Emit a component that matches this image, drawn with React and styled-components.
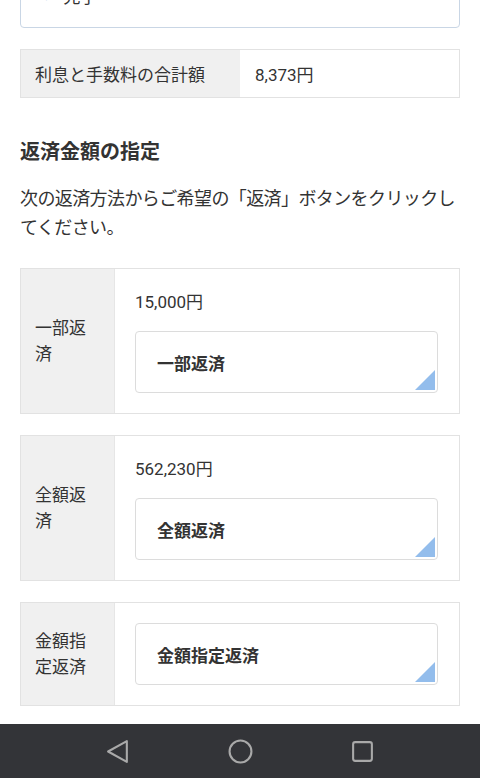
import styled, { createGlobalStyle } from "styled-components";

const GlobalStyle = createGlobalStyle`
  html, body {
    margin: 0;
    padding: 0;
    background: #fff;
  }
  body {
    font-family: Roboto, "Noto Sans CJK JP", "Noto Sans", sans-serif;
    color: #333;
    overflow: hidden;
  }
`

const Page = styled.div`
  padding: 0 20px 90px;
`

const StatusBox = styled.div`
  margin-top: -31px;
  padding: 14px 24px 17px;
  border: 1px solid #c9d6e5;
  border-radius: 4px;
  display: flex;
  align-items: center;
  gap: 10px;
  font-size: 17px;
  line-height: 26px;
`

const Chevron = styled.span`
  color: #8fb3dc;
  font-size: 16px;
`

const SummaryTable = styled.div`
  margin-top: 21px;
  display: grid;
  grid-template-columns: 219px 1fr;
  border: 1px solid #e2e2e2;
  font-size: 17px;
  height: 47px;
`

const Cell = styled.div`
  display: flex;
  align-items: center;
  padding-left: ${(p) => (p.head ? "14px" : "15px")};
  background: ${(p) => (p.head ? "#f0f0f0" : "#fff")};
`

const Heading = styled.h2`
  margin: 39px 0 0;
  font-size: 20px;
  line-height: 30px;
  font-weight: 700;
  color: #333;
`

const Lead = styled.p`
  margin: 17px -4px 0 0;
  font-size: 18px;
  line-height: 29px;
  letter-spacing: -0.6px;
`

const CardList = styled.div`
  margin-top: 26px;
  display: flex;
  flex-direction: column;
  gap: 21px;
`

const Card = styled.div`
  display: grid;
  grid-template-columns: 94px 1fr;
  border: 1px solid #e2e2e2;
`

const Label = styled.div`
  display: flex;
  align-items: center;
  padding: 0 15px 0 14px;
  background: #f0f0f0;
  border-right: 1px solid #e6e6e6;
  font-size: 17px;
  line-height: 26px;
`

const Body = styled.div`
  padding: 20px 21px 20px 20px;
  display: flex;
  flex-direction: column;
`

const Amount = styled.div`
  font-size: 17px;
  line-height: 26px;
  margin-bottom: 16px;
`

const PayButton = styled.button`
  position: relative;
  height: 62px;
  padding: 0 21px;
  text-align: left;
  background: #fff;
  border: 1px solid #dcdcdc;
  border-radius: 4px;
  font-family: inherit;
  font-size: 17px;
  font-weight: 700;
  color: #333;

  &::after {
    content: "";
    position: absolute;
    right: 2px;
    bottom: 2px;
    width: 0;
    height: 0;
    border-style: solid;
    border-width: 0 0 20px 20px;
    border-color: transparent transparent #93bdec transparent;
  }
`

const NavBar = styled.div`
  position: fixed;
  left: 0;
  right: 0;
  bottom: 0;
  height: 54px;
  background: #333438;
  display: flex;
  align-items: center;
  justify-content: center;
  gap: 97px;
`

const NavIcon = styled.svg`
  width: 25px;
  height: 25px;
  fill: none;
  stroke: #a9a9a9;
  stroke-width: 2;
  stroke-linejoin: round;
`

const options = [
  { label: "一部返済", amount: "15,000円" },
  { label: "全額返済", amount: "562,230円" },
  { label: "金額指定返済" },
]

const App = () => {
  return (
    <>
      <GlobalStyle />
      <Page>
        <StatusBox>
          <Chevron>&gt;</Chevron>
          <span>完了</span>
        </StatusBox>

        <SummaryTable>
          <Cell head>利息と手数料の合計額</Cell>
          <Cell>8,373円</Cell>
        </SummaryTable>

        <Heading>返済金額の指定</Heading>
        <Lead>次の返済方法からご希望の「返済」ボタンをクリックしてください。</Lead>

        <CardList>
          {options.map((o) => (
            <Card key={o.label}>
              <Label>{o.label}</Label>
              <Body>
                {o.amount && <Amount>{o.amount}</Amount>}
                <PayButton>{o.label}</PayButton>
              </Body>
            </Card>
          ))}
        </CardList>
      </Page>

      <NavBar>
        <NavIcon viewBox="0 0 24 24">
          <path d="M20 2 L20 22 L2 12 Z" />
        </NavIcon>
        <NavIcon viewBox="0 0 24 24">
          <circle cx="12" cy="12" r="10.5" />
        </NavIcon>
        <NavIcon viewBox="0 0 24 24">
          <rect x="3" y="3" width="18" height="18" rx="2" />
        </NavIcon>
      </NavBar>
    </>
  );
}

export default App;
